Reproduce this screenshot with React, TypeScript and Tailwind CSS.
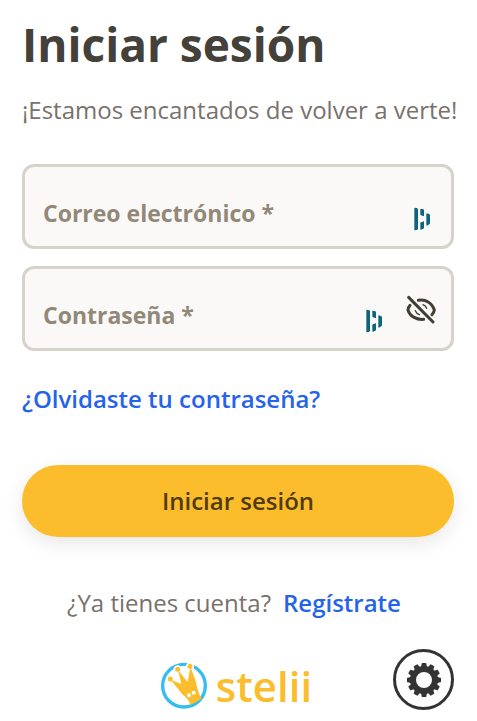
import React, { useState } from 'react';

const DashIcon = () => (
  <svg className="h-6 w-[18px]" viewBox="0 0 54 72" fill="#0e6478" aria-hidden="true">
    <path d="M4 4Q4 2 6 2L13 4Q15 5 15 7V65Q15 67 13 68L6 70Q4 70 4 68Z" />
    <path d="M22 7Q22 5 24 5L31 7Q33 8 33 10V28L24 25Q22 24 22 22Z" />
    <path d="M22 49Q22 47 24 46L33 43V62Q33 64 31 65L24 68Q22 68 22 66Z" />
    <path d="M40 21Q40 19 42 19L49 22Q51 23 51 25V49Q51 51 49 52L42 56Q40 56 40 54Z" />
  </svg>
);

const EyeOffIcon = () => (
  <svg
    className="h-8 w-8"
    viewBox="0 0 96 96"
    fill="none"
    stroke="#403e35"
    strokeWidth="9"
    strokeLinecap="round"
    strokeLinejoin="round"
    aria-hidden="true"
  >
    <path d="M11 13L84 87" />
    <path d="M40 22C62 18 81 29 88 51C87 57 85 61 81 65" />
    <path d="M15 37C11 41 9 46 9 51C15 71 36 81 56 79" />
    <path d="M54 35Q62 38 65 46M31 53Q34 61 43 65" strokeWidth="4" />
  </svg>
);

const GearIcon = () => (
  <svg className="h-9 w-9" viewBox="-18 -18 36 36" fill="#333333" aria-hidden="true">
    <circle r="11" fill="none" stroke="#333333" strokeWidth="6" />
    {[0, 30, 60, 90, 120, 150, 180, 210, 240, 270, 300, 330].map((angle) => (
      <path key={angle} d="M-3 -13L-2.3 -16.4Q-2.2 -17 -1.6 -17H1.6Q2.2 -17 2.3 -16.4L3 -13Z" transform={`rotate(${angle})`} />
    ))}
  </svg>
);

const CrownLogo = () => (
  <svg className="h-12 w-12" viewBox="0 0 144 144" aria-hidden="true">
    <circle cx="72" cy="71" r="64" fill="none" stroke="#33bdf0" strokeWidth="10" />
    <g fill="#fbbd2c" stroke="#ffffff" strokeWidth="5">
      <circle cx="31" cy="51" r="10" />
      <circle cx="53" cy="22" r="10" />
      <circle cx="90" cy="13" r="10" />
    </g>
    <path
      d="M32 53L64 66L54 24L83 60L91 14L107 56Q112 88 125 110Q110 120 91 129C88 116 80 106 68 98Z"
      fill="#fbbd2c"
    />
    <circle cx="87" cy="100" r="6" fill="#ffffff" />
    <circle cx="101" cy="92" r="6" fill="#ffffff" />
  </svg>
);

const fieldClass =
  'peer w-full min-w-0 bg-transparent pt-5 text-2xl text-[#44403a] focus:outline-none';
const labelClass =
  'pointer-events-none absolute left-[18px] top-7 text-[23px] leading-9 font-bold text-[#928877] peer-focus:top-1 peer-focus:text-base';

const App = () => {
  const [showPassword, setShowPassword] = useState(false);

  return (
    <main className="bg-white pt-3 pr-[23px] pl-[22px] font-['Open_Sans',sans-serif]">
      <h1 className="text-[46px] leading-[64px] font-bold text-[#44403a]">Iniciar sesión</h1>
      <p className="mt-4 text-2xl leading-9 whitespace-nowrap text-[#78716c]">
        ¡Estamos encantados de volver a verte!
      </p>

      <form className="mt-9" onSubmit={(e) => e.preventDefault()}>
        <div className="relative flex h-[85px] items-stretch rounded-xl border-3 border-[#d6d3ca] bg-[#faf9f7] pr-5 pl-[18px]">
          <input id="email" type="email" required className={fieldClass} />
          <label htmlFor="email" className={labelClass}>
            Correo electrónico *
          </label>
          <span className="self-center pt-6">
            <DashIcon />
          </span>
        </div>

        <div className="relative mt-[17px] flex h-[85px] items-stretch rounded-xl border-3 border-[#d6d3ca] bg-[#faf9f7] pr-3.5 pl-[18px]">
          <input
            id="password"
            type={showPassword ? 'text' : 'password'}
            required
            className={fieldClass}
          />
          <label htmlFor="password" className={labelClass}>
            Contraseña *
          </label>
          <span className="mr-[22px] self-center pt-6">
            <DashIcon />
          </span>
          <button
            type="button"
            aria-label="Mostrar contraseña"
            className="self-center"
            onClick={() => setShowPassword(!showPassword)}
          >
            <EyeOffIcon />
          </button>
        </div>

        <a href="#" className="mt-[30px] block text-2xl leading-9 font-semibold text-[#2563eb]">
          ¿Olvidaste tu contraseña?
        </a>

        <button
          type="submit"
          className="mt-12 h-[72px] w-full rounded-full bg-[#fbbd2c] text-2xl font-semibold text-[#503b10] shadow-[0_6px_20px_rgba(0,0,0,0.1)]"
        >
          Iniciar sesión
        </button>
      </form>

      <p className="mt-12 flex justify-center gap-3 pr-2 text-2xl leading-9 whitespace-nowrap text-[#78716c]">
        <span>¿Ya tienes cuenta?</span>
        <a href="#" className="font-semibold text-[#2563eb]">
          Regístrate
        </a>
      </p>

      <footer className="mt-7 grid grid-cols-[1fr_auto_1fr] items-center">
        <div className="col-start-2 flex items-center gap-2 pt-3 pr-1">
          <CrownLogo />
          <span className="text-[42px] leading-12 font-semibold text-[#fbbd2c]">stelii</span>
        </div>
        <button
          type="button"
          aria-label="Ajustes"
          className="flex h-[61px] w-[61px] items-center justify-center justify-self-end rounded-full border-3 border-[#333333] bg-white"
        >
          <GearIcon />
        </button>
      </footer>
    </main>
  );
};

export default App;
